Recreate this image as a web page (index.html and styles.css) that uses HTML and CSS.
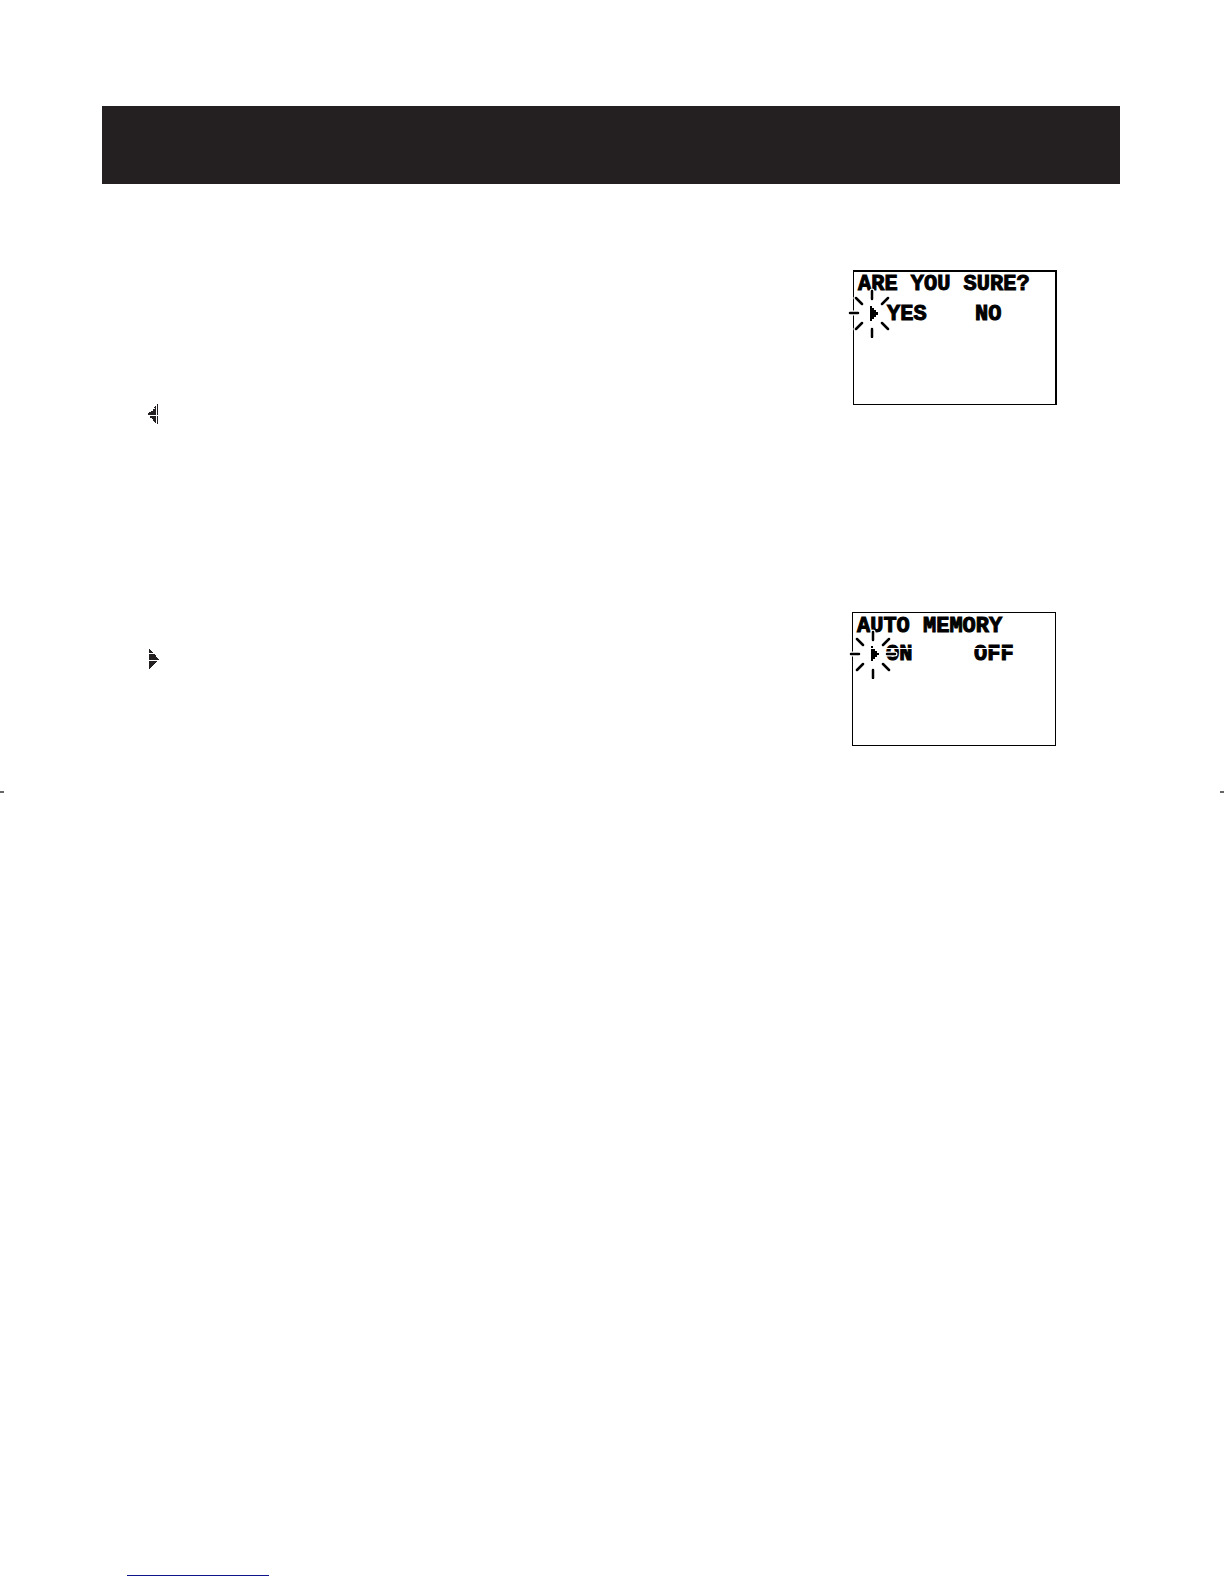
FILE: index.html
```
<!DOCTYPE html>
<html lang="en">
<head>
    <meta charset="utf-8">
    <title>Auto Memory</title>
    <link rel="stylesheet" href="styles.css">
</head>
<body>

<header class="banner"></header>

<main class="steps">
    <section class="step">
        <svg class="arrow arrow-left" viewBox="0 0 10 20" aria-hidden="true">
            <path d="M9 0h1v11H9zM9 12h1v8H9zM7 2h1v9H7zM6 3h2v1H6zM5 5h3v6H5zM3 7h2v4H3zM1 8h2v3H1zM0 9h1v2H0zM2 12h6v2H2zM4 14h4v1H4zM5 15h3v2H5zM6 17h2v1H6zM7 18h1v1H7z"/>
        </svg>
        <div class="screen screen-confirm">
            <p class="title">ARE YOU SURE?</p>
            <p class="options"><span>YES</span><span>NO</span></p>
            <svg class="cursor" viewBox="0 0 50 50" aria-hidden="true">
                <g class="halo"><path d="M25 3v8M25 41v8M3 25h8M9 10l6 6M35 16l6-6M9 41l6-6M35 35l6 6"/></g>
                <g class="rays"><path d="M25 3v8M25 41v8M3 25h8M9 10l6 6M35 16l6-6M9 41l6-6M35 35l6 6"/></g>
                <path d="M23 18h2v2h2v2h2v2h2v3h-2v2h-2v2h-2v2h-2z"/>
            </svg>
        </div>
    </section>

    <section class="step">
        <svg class="arrow arrow-right" viewBox="0 0 10 20" aria-hidden="true">
            <path d="M0 0h1v1h1v1h1v1h1v1H0zM0 5h6v1h1v2h1v1h1v1h1v1H0zM0 12h8v1H7v1H6v1H5v1H4v1H3v1H2v1H1v1H0z"/>
        </svg>
        <div class="screen screen-memory">
            <p class="title">AUTO MEMORY</p>
            <p class="options"><span>ON</span><span>OFF</span></p>
            <svg class="cursor" viewBox="0 0 50 50" aria-hidden="true">
                <g class="halo"><path d="M25 3v8M25 41v8M3 25h8M39 25h8M9 10l6 6M35 16l6-6M9 41l6-6M35 35l6 6"/></g>
                <g class="rays"><path d="M25 3v8M25 41v8M3 25h8M39 25h8M9 10l6 6M35 16l6-6M9 41l6-6M35 35l6 6"/></g>
                <path d="M23 17h2v2h-2zM23 20h4v2h2v2h2v2h-2v2h-2v2h-2v2h-2z"/>
            </svg>
        </div>
    </section>
</main>

<div class="crop-marks"><span></span><span></span></div>

<footer class="footer">
    <div class="underline"></div>
</footer>

</body>
</html>
```
FILE: styles.css
```
* { margin: 0; padding: 0; box-sizing: border-box; }

body {
    min-height: 100vh;
    display: flex;
    flex-direction: column;
    background: #fff;
    color: #000;
    font-family: "Liberation Mono", monospace;
}

.banner {
    height: 78px;
    margin: 106px 104px 0 102px;
    background: #242021;
}

.steps {
    display: flex;
    flex-direction: column;
    gap: 188px;
    padding: 86px 167px 0 148px;
}

.step {
    display: flex;
    justify-content: space-between;
    align-items: flex-start;
}

/* Direction arrows */
.arrow {
    width: 10px;
    height: 20px;
    fill: #242021;
    shape-rendering: crispEdges;
}

.arrow-left {
    margin-top: 134px;
}

.arrow-right {
    margin-top: 37px;
    margin-left: 1px;
}

/* LCD screens */
.screen {
    position: relative;
    width: 204px;
    height: 134px;
    padding-left: 4px;
    border: 1px solid #000;
    font-size: 22px;
    font-weight: bold;
    line-height: 28px;
    -webkit-text-stroke: 1px #000;
}

.screen-confirm {
    height: 135px;
    border-top-width: 2px;
    border-right-width: 2px;
    line-height: 26px;
}

.screen-memory {
    margin-right: 1px;
}

.options {
    display: grid;
    grid-template-columns: 88px 1fr;
    padding-left: 29px;
}

.screen-confirm .options {
    padding-top: 4px;
}

/* Blank pixel row through the memory options */
.screen-memory .options::after {
    content: "";
    position: absolute;
    top: 35px;
    left: 32px;
    right: 32px;
    height: 1px;
    background: #fff;
}

/* Blinking cursor, lies over the frame and the text */
.cursor {
    position: absolute;
    top: 16px;
    left: -7px;
    width: 50px;
    height: 50px;
}

.screen-memory .cursor {
    left: -5px;
}

.halo,
.rays {
    fill: none;
    stroke-linecap: round;
}

.halo {
    stroke: #fff;
    stroke-width: 5px;
}

.rays {
    stroke: #000;
    stroke-width: 2.5px;
}

/* Marks at the page edges */
.crop-marks {
    display: flex;
    justify-content: space-between;
    margin-top: 45px;
}

.crop-marks span {
    width: 4px;
    height: 2px;
    background: #666;
}

.footer {
    margin-top: auto;
    padding: 0 0 8px 127px;
}

.underline {
    width: 142px;
    height: 1px;
    background: #10148c;
}
```
